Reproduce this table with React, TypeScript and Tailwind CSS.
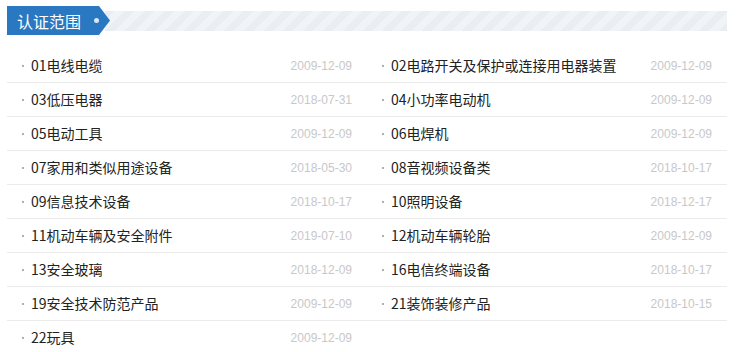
const items = [
  { name: "01电线电缆", date: "2009-12-09" },
  { name: "02电路开关及保护或连接用电器装置", date: "2009-12-09" },
  { name: "03低压电器", date: "2018-07-31" },
  { name: "04小功率电动机", date: "2009-12-09" },
  { name: "05电动工具", date: "2009-12-09" },
  { name: "06电焊机", date: "2009-12-09" },
  { name: "07家用和类似用途设备", date: "2018-05-30" },
  { name: "08音视频设备类", date: "2018-10-17" },
  { name: "09信息技术设备", date: "2018-10-17" },
  { name: "10照明设备", date: "2018-12-17" },
  { name: "11机动车辆及安全附件", date: "2019-07-10" },
  { name: "12机动车辆轮胎", date: "2009-12-09" },
  { name: "13安全玻璃", date: "2018-12-09" },
  { name: "16电信终端设备", date: "2018-10-17" },
  { name: "19安全技术防范产品", date: "2009-12-09" },
  { name: "21装饰装修产品", date: "2018-10-15" },
  { name: "22玩具", date: "2009-12-09" },
]

export default function App() {
  return (
    <div className="h-[352px] w-[742px] overflow-hidden bg-white px-[7px] pt-[6px] font-['Noto_Sans_CJK_SC',sans-serif]">
      <div className="flex w-[720px] items-start">
        <div className="flex h-[29px] w-[103px] shrink-0 items-center bg-[#2a78c2] pl-[10px] [clip-path:polygon(0_0,92px_0,100%_50%,92px_100%,0_100%)]">
          <span className="text-[16px] leading-none text-white">认证范围</span>
          <span className="ml-[13px] h-[5px] w-[5px] rounded-full bg-[#dbe6f2]" />
        </div>
        <div className="-ml-[5px] mt-[5px] h-[20px] flex-1 bg-[repeating-linear-gradient(135deg,#e9eef3_0,#e9eef3_7px,#f1f4f7_7px,#f1f4f7_14px)]" />
      </div>
      <ul className="mt-[14px] grid w-[720px] grid-cols-2">
        {items.map((it) => (
          <li
            key={it.name}
            className="flex h-[34px] items-center border-b border-[#ebebeb] pl-[15px] pr-[15px]"
          >
            <span className="mr-[7px] h-[2px] w-[2px] bg-[#b0b0b0]" />
            <span className="flex-1 text-[14px] text-[#222]">{it.name}</span>
            <span className="font-['Liberation_Sans',sans-serif] text-[12px] text-[#c8c8c8]">{it.date}</span>
          </li>
        ))}
      </ul>
    </div>
  )
}
